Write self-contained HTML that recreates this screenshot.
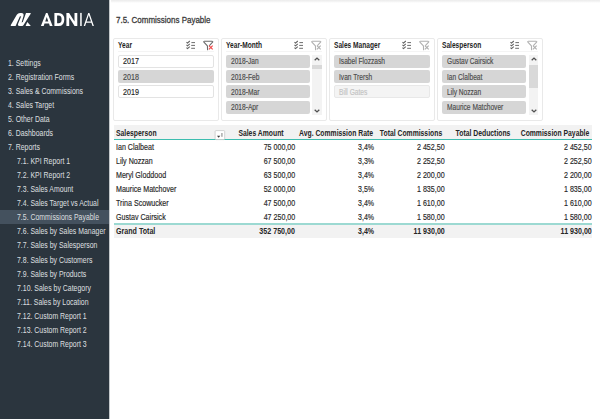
<!DOCTYPE html>
<html><head><meta charset="utf-8">
<style>
*{margin:0;padding:0;box-sizing:border-box}
html,body{width:600px;height:419px;overflow:hidden;background:#fff;font-family:"Liberation Sans",sans-serif}
.a{position:absolute}
.t{position:absolute;white-space:nowrap;-webkit-text-stroke:0.15px currentColor}
.sd{color:#d8dcdf;-webkit-text-stroke:0.05px currentColor}
.sl{position:absolute;top:38px;width:106px;height:83px;border:1px solid #e9e9e9;border-radius:2px;background:#fff}
.sep{position:absolute;height:1px;background:#f4f4f4}
.it{position:absolute;height:13.2px;border-radius:2px}
.sel{background:#d6d6d6}
.uns{background:#fff;border:1px solid #e3e3e3}
.dis{background:#f4f4f4;border:1px solid #e8e8e8}
.sb{position:absolute;background:#f3f3f3}
.thumb{position:absolute;background:#d9d9d9}
</style></head><body>
<div class="a" style="left:0;top:0;width:109px;height:419px;background:#2b353e"></div>
<div class="a" style="left:109px;top:0;width:1px;height:419px;background:#c4c8cb"></div>
<div class="a" style="left:0;top:210px;width:109px;height:14px;background:#44515e"></div>
<svg class="a" style="left:0;top:0" width="109" height="40" viewBox="0 0 109 40"><g fill="#fff" fill-rule="evenodd">
<path d="M11.2,25.9 Q10.3,25.9 10.8,25.0 L16.8,14.8 Q17.9,12.9 20.0,12.9 L21.4,12.9 Q24.2,13.0 23.5,16.0 L21.6,22.5 L22.8,22.0 L26.0,13.0 L30.2,13.0 Q31.2,13.0 30.7,13.8 L23.4,25.3 Q23.0,25.9 22.2,25.9 L19.6,25.9 Q17.4,25.9 18.1,23.7 L21.2,16.2 L19.8,16.6 L15.6,25.9 Z"/>
<path d="M27.3,21.9 L30.8,25.9 L25.6,25.9 Z"/>
<path d="M40.9,26 L46.0,12.9 L47.5,12.9 L52.6,26 L49.8,26 L49.0,23.6 L44.5,23.6 L43.7,26 Z M45.2,21.4 L48.3,21.4 L46.75,16.9 Z"/>
<path d="M54.4,12.9 H58.6 Q64.3,12.9 64.3,19.45 Q64.3,26 58.6,26 H54.4 Z M57.1,15.6 V23.2 H58.6 Q61.6,23.2 61.6,19.4 Q61.6,15.6 58.6,15.6 Z"/>
<path d="M66.4,26 V12.9 H69.1 L74.5,21.5 V12.9 H77.3 V26 H74.6 L69.2,17.4 V26 Z"/>
<rect x="80.2" y="12.9" width="1.5" height="13.1"/>
<path d="M83.7,26 L88.2,12.9 L89.4,12.9 L93.9,26 H92.5 L91.4,22.7 H86.2 L85.1,26 Z M86.6,21.5 H91.0 L88.8,14.9 Z"/>
</g></svg>
<div class="t sd" style="top:55.82px;font-size:8.6px;line-height:14px;height:14px;left:7.80px;transform-origin:0 50%;transform:scaleX(0.806);">1. Settings</div>
<div class="t sd" style="top:69.87px;font-size:8.6px;line-height:14px;height:14px;left:7.80px;transform-origin:0 50%;transform:scaleX(0.806);">2. Registration Forms</div>
<div class="t sd" style="top:83.92px;font-size:8.6px;line-height:14px;height:14px;left:7.80px;transform-origin:0 50%;transform:scaleX(0.806);">3. Sales &amp; Commissions</div>
<div class="t sd" style="top:97.97px;font-size:8.6px;line-height:14px;height:14px;left:7.80px;transform-origin:0 50%;transform:scaleX(0.806);">4. Sales Target</div>
<div class="t sd" style="top:112.02px;font-size:8.6px;line-height:14px;height:14px;left:7.80px;transform-origin:0 50%;transform:scaleX(0.806);">5. Other Data</div>
<div class="t sd" style="top:126.07px;font-size:8.6px;line-height:14px;height:14px;left:7.80px;transform-origin:0 50%;transform:scaleX(0.806);">6. Dashboards</div>
<div class="t sd" style="top:140.12px;font-size:8.6px;line-height:14px;height:14px;left:7.80px;transform-origin:0 50%;transform:scaleX(0.806);">7. Reports</div>
<div class="t sd" style="top:154.17px;font-size:8.6px;line-height:14px;height:14px;left:16.50px;transform-origin:0 50%;transform:scaleX(0.806);">7.1. KPI Report 1</div>
<div class="t sd" style="top:168.22px;font-size:8.6px;line-height:14px;height:14px;left:16.50px;transform-origin:0 50%;transform:scaleX(0.806);">7.2. KPI Report 2</div>
<div class="t sd" style="top:182.27px;font-size:8.6px;line-height:14px;height:14px;left:16.50px;transform-origin:0 50%;transform:scaleX(0.806);">7.3. Sales Amount</div>
<div class="t sd" style="top:196.32px;font-size:8.6px;line-height:14px;height:14px;left:16.50px;transform-origin:0 50%;transform:scaleX(0.806);">7.4. Sales Target vs Actual</div>
<div class="t sd" style="top:210.37px;font-size:8.6px;line-height:14px;height:14px;left:16.50px;transform-origin:0 50%;transform:scaleX(0.806);">7.5. Commissions Payable</div>
<div class="t sd" style="top:224.42px;font-size:8.6px;line-height:14px;height:14px;left:16.50px;transform-origin:0 50%;transform:scaleX(0.806);">7.6. Sales by Sales Manager</div>
<div class="t sd" style="top:238.47px;font-size:8.6px;line-height:14px;height:14px;left:16.50px;transform-origin:0 50%;transform:scaleX(0.806);">7.7. Sales by Salesperson</div>
<div class="t sd" style="top:252.52px;font-size:8.6px;line-height:14px;height:14px;left:16.50px;transform-origin:0 50%;transform:scaleX(0.806);">7.8. Sales by Customers</div>
<div class="t sd" style="top:266.57px;font-size:8.6px;line-height:14px;height:14px;left:16.50px;transform-origin:0 50%;transform:scaleX(0.806);">7.9. Sales by Products</div>
<div class="t sd" style="top:280.62px;font-size:8.6px;line-height:14px;height:14px;left:16.50px;transform-origin:0 50%;transform:scaleX(0.806);">7.10. Sales by Category</div>
<div class="t sd" style="top:294.67px;font-size:8.6px;line-height:14px;height:14px;left:16.50px;transform-origin:0 50%;transform:scaleX(0.806);">7.11. Sales by Location</div>
<div class="t sd" style="top:308.72px;font-size:8.6px;line-height:14px;height:14px;left:16.50px;transform-origin:0 50%;transform:scaleX(0.806);">7.12. Custom Report 1</div>
<div class="t sd" style="top:322.77px;font-size:8.6px;line-height:14px;height:14px;left:16.50px;transform-origin:0 50%;transform:scaleX(0.806);">7.13. Custom Report 2</div>
<div class="t sd" style="top:336.82px;font-size:8.6px;line-height:14px;height:14px;left:16.50px;transform-origin:0 50%;transform:scaleX(0.806);">7.14. Custom Report 3</div>
<div class="a" style="left:111px;top:0;width:489px;height:2.6px;background:linear-gradient(#ebebeb,#f6f6f6 60%,#fff)"></div>
<div class="t " style="top:12.90px;font-size:9.8px;line-height:14px;height:14px;color:#3a3a3a;left:115.60px;transform-origin:0 50%;transform:scaleX(0.815);-webkit-text-stroke:0.3px currentColor;">7.5. Commissions Payable</div>
<div class="sl" style="left:113.0px"></div>
<div class="sep" style="left:118.0px;width:96px;top:51px"></div>
<div class="t " style="top:37.89px;font-size:8.4px;line-height:14px;height:14px;font-weight:bold;-webkit-text-stroke:0.02px currentColor;color:#1f1f1f;left:118.00px;transform-origin:0 50%;transform:scaleX(0.788);">Year</div>
<div class="it uns" style="left:118.0px;top:54.7px;width:96.0px"></div>
<div class="t " style="top:55.26px;font-size:8.2px;line-height:14px;height:14px;color:#262626;left:123.00px;transform-origin:0 50%;transform:scaleX(0.875);">2017</div>
<div class="it sel" style="left:118.0px;top:70.0px;width:96.0px"></div>
<div class="t " style="top:70.56px;font-size:8.2px;line-height:14px;height:14px;color:#4a4a4a;left:123.00px;transform-origin:0 50%;transform:scaleX(0.875);">2018</div>
<div class="it uns" style="left:118.0px;top:85.3px;width:96.0px"></div>
<div class="t " style="top:85.86px;font-size:8.2px;line-height:14px;height:14px;color:#262626;left:123.00px;transform-origin:0 50%;transform:scaleX(0.875);">2019</div>
<svg class="a" style="left:186.0px;top:40px" width="10" height="10" viewBox="0 0 10 10">
<g fill="none" stroke="#606060" stroke-width="1.05" stroke-linejoin="round"><polyline points="0.5,2.1 1.5,3.1 3.8,1.0"/><polyline points="0.5,4.9 1.5,5.9 3.8,3.8"/><polyline points="0.5,7.7 1.5,8.7 3.8,6.6"/></g>
<g stroke="#646464" stroke-width="0.95"><line x1="5.4" y1="2.6" x2="9" y2="2.6"/><line x1="5.2" y1="5.4" x2="9" y2="5.4"/><line x1="5.2" y1="8.3" x2="9" y2="8.3"/></g></svg>
<svg class="a" style="left:203.3px;top:40px" width="11" height="11" viewBox="0 0 11 11">
<path d="M4.6,9.7 L4.4,5.8 L0.9,2.1 Q0.4,1.3 1.4,1.3 L9.1,1.3 Q10.1,1.3 9.6,2.1 L6.6,5.3" fill="none" stroke="#6a6a6a" stroke-width="1.1" stroke-linejoin="round" stroke-linecap="round"/>
<g stroke="#f04a4a" stroke-width="1.15"><line x1="5.9" y1="5.6" x2="9.7" y2="9.4"/><line x1="9.7" y1="5.6" x2="5.9" y2="9.4"/></g></svg>
<div class="sl" style="left:220.6px"></div>
<div class="sep" style="left:225.6px;width:96px;top:51px"></div>
<div class="t " style="top:37.89px;font-size:8.4px;line-height:14px;height:14px;font-weight:bold;-webkit-text-stroke:0.02px currentColor;color:#1f1f1f;left:225.60px;transform-origin:0 50%;transform:scaleX(0.788);">Year-Month</div>
<div class="it sel" style="left:225.6px;top:54.7px;width:84.2px"></div>
<div class="t " style="top:55.26px;font-size:8.2px;line-height:14px;height:14px;color:#4a4a4a;left:230.60px;transform-origin:0 50%;transform:scaleX(0.809);">2018-Jan</div>
<div class="it sel" style="left:225.6px;top:70.0px;width:84.2px"></div>
<div class="t " style="top:70.56px;font-size:8.2px;line-height:14px;height:14px;color:#4a4a4a;left:230.60px;transform-origin:0 50%;transform:scaleX(0.809);">2018-Feb</div>
<div class="it sel" style="left:225.6px;top:85.3px;width:84.2px"></div>
<div class="t " style="top:85.86px;font-size:8.2px;line-height:14px;height:14px;color:#4a4a4a;left:230.60px;transform-origin:0 50%;transform:scaleX(0.809);">2018-Mar</div>
<div class="it sel" style="left:225.6px;top:100.7px;width:84.2px"></div>
<div class="t " style="top:101.26px;font-size:8.2px;line-height:14px;height:14px;color:#4a4a4a;left:230.60px;transform-origin:0 50%;transform:scaleX(0.809);">2018-Apr</div>
<div class="sb" style="left:312.4px;top:54.8px;width:9.4px;height:60.5px"></div>
<div class="thumb" style="left:312.4px;top:65px;width:9.4px;height:4.2px"></div>
<svg class="a" style="left:314.1px;top:57.3px" width="6" height="4" viewBox="0 0 6 4"><polyline points="0.7,3.3 3,1.1 5.3,3.3" fill="none" stroke="#505050" stroke-width="1.3"/></svg>
<svg class="a" style="left:314.1px;top:108.5px" width="6" height="4" viewBox="0 0 6 4"><polyline points="0.7,0.7 3,2.9 5.3,0.7" fill="none" stroke="#505050" stroke-width="1.3"/></svg>
<svg class="a" style="left:293.6px;top:40px" width="10" height="10" viewBox="0 0 10 10">
<g fill="none" stroke="#606060" stroke-width="1.05" stroke-linejoin="round"><polyline points="0.5,2.1 1.5,3.1 3.8,1.0"/><polyline points="0.5,4.9 1.5,5.9 3.8,3.8"/><polyline points="0.5,7.7 1.5,8.7 3.8,6.6"/></g>
<g stroke="#646464" stroke-width="0.95"><line x1="5.4" y1="2.6" x2="9" y2="2.6"/><line x1="5.2" y1="5.4" x2="9" y2="5.4"/><line x1="5.2" y1="8.3" x2="9" y2="8.3"/></g></svg>
<svg class="a" style="left:310.9px;top:40px" width="11" height="11" viewBox="0 0 11 11">
<path d="M4.6,9.7 L4.4,5.8 L0.9,2.1 Q0.4,1.3 1.4,1.3 L9.1,1.3 Q10.1,1.3 9.6,2.1 L6.6,5.3" fill="none" stroke="#b0b0b0" stroke-width="1.1" stroke-linejoin="round" stroke-linecap="round"/>
<g stroke="#b0b0b0" stroke-width="1.15"><line x1="5.9" y1="5.6" x2="9.7" y2="9.4"/><line x1="9.7" y1="5.6" x2="5.9" y2="9.4"/></g></svg>
<div class="sl" style="left:328.8px"></div>
<div class="sep" style="left:333.8px;width:96px;top:51px"></div>
<div class="t " style="top:37.89px;font-size:8.4px;line-height:14px;height:14px;font-weight:bold;-webkit-text-stroke:0.02px currentColor;color:#1f1f1f;left:333.80px;transform-origin:0 50%;transform:scaleX(0.788);">Sales Manager</div>
<div class="it sel" style="left:333.8px;top:54.7px;width:96.0px"></div>
<div class="t " style="top:55.26px;font-size:8.2px;line-height:14px;height:14px;color:#4a4a4a;left:338.80px;transform-origin:0 50%;transform:scaleX(0.809);">Isabel Flozzash</div>
<div class="it sel" style="left:333.8px;top:70.0px;width:96.0px"></div>
<div class="t " style="top:70.56px;font-size:8.2px;line-height:14px;height:14px;color:#4a4a4a;left:338.80px;transform-origin:0 50%;transform:scaleX(0.809);">Ivan Trersh</div>
<div class="it dis" style="left:333.8px;top:85.3px;width:96.0px"></div>
<div class="t " style="top:85.86px;font-size:8.2px;line-height:14px;height:14px;color:#c3c3c3;left:338.80px;transform-origin:0 50%;transform:scaleX(0.809);">Bill Gates</div>
<svg class="a" style="left:401.8px;top:40px" width="10" height="10" viewBox="0 0 10 10">
<g fill="none" stroke="#606060" stroke-width="1.05" stroke-linejoin="round"><polyline points="0.5,2.1 1.5,3.1 3.8,1.0"/><polyline points="0.5,4.9 1.5,5.9 3.8,3.8"/><polyline points="0.5,7.7 1.5,8.7 3.8,6.6"/></g>
<g stroke="#646464" stroke-width="0.95"><line x1="5.4" y1="2.6" x2="9" y2="2.6"/><line x1="5.2" y1="5.4" x2="9" y2="5.4"/><line x1="5.2" y1="8.3" x2="9" y2="8.3"/></g></svg>
<svg class="a" style="left:419.1px;top:40px" width="11" height="11" viewBox="0 0 11 11">
<path d="M4.6,9.7 L4.4,5.8 L0.9,2.1 Q0.4,1.3 1.4,1.3 L9.1,1.3 Q10.1,1.3 9.6,2.1 L6.6,5.3" fill="none" stroke="#b0b0b0" stroke-width="1.1" stroke-linejoin="round" stroke-linecap="round"/>
<g stroke="#b0b0b0" stroke-width="1.15"><line x1="5.9" y1="5.6" x2="9.7" y2="9.4"/><line x1="9.7" y1="5.6" x2="5.9" y2="9.4"/></g></svg>
<div class="sl" style="left:437.1px"></div>
<div class="sep" style="left:442.1px;width:96px;top:51px"></div>
<div class="t " style="top:37.89px;font-size:8.4px;line-height:14px;height:14px;font-weight:bold;-webkit-text-stroke:0.02px currentColor;color:#1f1f1f;left:442.10px;transform-origin:0 50%;transform:scaleX(0.788);">Salesperson</div>
<div class="it sel" style="left:442.1px;top:54.7px;width:84.2px"></div>
<div class="t " style="top:55.26px;font-size:8.2px;line-height:14px;height:14px;color:#4a4a4a;left:447.10px;transform-origin:0 50%;transform:scaleX(0.809);">Gustav Cairsick</div>
<div class="it sel" style="left:442.1px;top:70.0px;width:84.2px"></div>
<div class="t " style="top:70.56px;font-size:8.2px;line-height:14px;height:14px;color:#4a4a4a;left:447.10px;transform-origin:0 50%;transform:scaleX(0.809);">Ian Clalbeat</div>
<div class="it sel" style="left:442.1px;top:85.3px;width:84.2px"></div>
<div class="t " style="top:85.86px;font-size:8.2px;line-height:14px;height:14px;color:#4a4a4a;left:447.10px;transform-origin:0 50%;transform:scaleX(0.809);">Lily Nozzan</div>
<div class="it sel" style="left:442.1px;top:100.7px;width:84.2px"></div>
<div class="t " style="top:101.26px;font-size:8.2px;line-height:14px;height:14px;color:#4a4a4a;left:447.10px;transform-origin:0 50%;transform:scaleX(0.809);">Maurice Matchover</div>
<div class="sb" style="left:528.9px;top:54.8px;width:9.4px;height:60.5px"></div>
<div class="thumb" style="left:528.9px;top:65px;width:9.4px;height:22.8px"></div>
<svg class="a" style="left:530.6px;top:57.3px" width="6" height="4" viewBox="0 0 6 4"><polyline points="0.7,3.3 3,1.1 5.3,3.3" fill="none" stroke="#505050" stroke-width="1.3"/></svg>
<svg class="a" style="left:530.6px;top:108.5px" width="6" height="4" viewBox="0 0 6 4"><polyline points="0.7,0.7 3,2.9 5.3,0.7" fill="none" stroke="#505050" stroke-width="1.3"/></svg>
<svg class="a" style="left:510.1px;top:40px" width="10" height="10" viewBox="0 0 10 10">
<g fill="none" stroke="#606060" stroke-width="1.05" stroke-linejoin="round"><polyline points="0.5,2.1 1.5,3.1 3.8,1.0"/><polyline points="0.5,4.9 1.5,5.9 3.8,3.8"/><polyline points="0.5,7.7 1.5,8.7 3.8,6.6"/></g>
<g stroke="#646464" stroke-width="0.95"><line x1="5.4" y1="2.6" x2="9" y2="2.6"/><line x1="5.2" y1="5.4" x2="9" y2="5.4"/><line x1="5.2" y1="8.3" x2="9" y2="8.3"/></g></svg>
<svg class="a" style="left:527.4px;top:40px" width="11" height="11" viewBox="0 0 11 11">
<path d="M4.6,9.7 L4.4,5.8 L0.9,2.1 Q0.4,1.3 1.4,1.3 L9.1,1.3 Q10.1,1.3 9.6,2.1 L6.6,5.3" fill="none" stroke="#b0b0b0" stroke-width="1.1" stroke-linejoin="round" stroke-linecap="round"/>
<g stroke="#b0b0b0" stroke-width="1.15"><line x1="5.9" y1="5.6" x2="9.7" y2="9.4"/><line x1="9.7" y1="5.6" x2="5.9" y2="9.4"/></g></svg>
<div class="a" style="left:114px;top:125px;width:478.2px;height:14px;background:#f2f2f2"></div>
<div class="a" style="left:114px;top:138.8px;width:478.2px;height:1.4px;background:#3dbdaf"></div>
<div class="a" style="left:114px;top:224.7px;width:478.2px;height:13.2px;background:#f2f2f2"></div>
<div class="a" style="left:114px;top:223.4px;width:478.2px;height:1.3px;background:#9cd9d2"></div>
<svg class="a" style="left:214.2px;top:129.7px" width="12" height="11" viewBox="0 0 12 11">
<rect x="1.1" y="0.6" width="9.6" height="9" rx="1" fill="#fff" stroke="#c6c6c6" stroke-width="0.8"/>
<path d="M3.0,5.8 H6.3 L4.65,7.8 Z" fill="#3a3a3a"/><rect x="7.1" y="3" width="1.6" height="3.8" fill="#b0b0b0"/></svg>
<div class="t " style="top:125.89px;font-size:8.4px;line-height:14px;height:14px;font-weight:bold;-webkit-text-stroke:0.02px currentColor;color:#262626;left:115.80px;transform-origin:0 50%;transform:scaleX(0.814);">Salesperson</div>
<div class="t " style="top:125.89px;font-size:8.4px;line-height:14px;height:14px;font-weight:bold;-webkit-text-stroke:0.02px currentColor;color:#262626;left:261.00px;transform-origin:50% 50%;transform:translateX(-50%) scaleX(0.814);">Sales Amount</div>
<div class="t " style="top:125.89px;font-size:8.4px;line-height:14px;height:14px;font-weight:bold;-webkit-text-stroke:0.02px currentColor;color:#262626;left:336.00px;transform-origin:50% 50%;transform:translateX(-50%) scaleX(0.814);">Avg. Commission Rate</div>
<div class="t " style="top:125.89px;font-size:8.4px;line-height:14px;height:14px;font-weight:bold;-webkit-text-stroke:0.02px currentColor;color:#262626;left:411.40px;transform-origin:50% 50%;transform:translateX(-50%) scaleX(0.814);">Total Commissions</div>
<div class="t " style="top:125.89px;font-size:8.4px;line-height:14px;height:14px;font-weight:bold;-webkit-text-stroke:0.02px currentColor;color:#262626;left:483.10px;transform-origin:50% 50%;transform:translateX(-50%) scaleX(0.814);">Total Deductions</div>
<div class="t " style="top:125.89px;font-size:8.4px;line-height:14px;height:14px;font-weight:bold;-webkit-text-stroke:0.02px currentColor;color:#262626;left:555.30px;transform-origin:50% 50%;transform:translateX(-50%) scaleX(0.814);">Commission Payable</div>
<div class="t " style="top:140.19px;font-size:8.4px;line-height:14px;height:14px;color:#262626;left:116.00px;transform-origin:0 50%;transform:scaleX(0.848);">Ian Clalbeat</div>
<div class="t " style="top:140.19px;font-size:8.4px;line-height:14px;height:14px;color:#262626;right:304.70px;transform-origin:100% 50%;transform:scaleX(0.848);">75 000,00</div>
<div class="t " style="top:140.19px;font-size:8.4px;line-height:14px;height:14px;color:#262626;right:225.70px;transform-origin:100% 50%;transform:scaleX(0.84);">3,4%</div>
<div class="t " style="top:140.19px;font-size:8.4px;line-height:14px;height:14px;color:#262626;right:155.00px;transform-origin:100% 50%;transform:scaleX(0.848);">2 452,50</div>
<div class="t " style="top:140.19px;font-size:8.4px;line-height:14px;height:14px;color:#262626;right:8.70px;transform-origin:100% 50%;transform:scaleX(0.848);">2 452,50</div>
<div class="t " style="top:154.19px;font-size:8.4px;line-height:14px;height:14px;color:#262626;left:116.00px;transform-origin:0 50%;transform:scaleX(0.848);">Lily Nozzan</div>
<div class="t " style="top:154.19px;font-size:8.4px;line-height:14px;height:14px;color:#262626;right:304.70px;transform-origin:100% 50%;transform:scaleX(0.848);">67 500,00</div>
<div class="t " style="top:154.19px;font-size:8.4px;line-height:14px;height:14px;color:#262626;right:225.70px;transform-origin:100% 50%;transform:scaleX(0.84);">3,3%</div>
<div class="t " style="top:154.19px;font-size:8.4px;line-height:14px;height:14px;color:#262626;right:155.00px;transform-origin:100% 50%;transform:scaleX(0.848);">2 252,50</div>
<div class="t " style="top:154.19px;font-size:8.4px;line-height:14px;height:14px;color:#262626;right:8.70px;transform-origin:100% 50%;transform:scaleX(0.848);">2 252,50</div>
<div class="t " style="top:168.19px;font-size:8.4px;line-height:14px;height:14px;color:#262626;left:116.00px;transform-origin:0 50%;transform:scaleX(0.848);">Meryl Gloddood</div>
<div class="t " style="top:168.19px;font-size:8.4px;line-height:14px;height:14px;color:#262626;right:304.70px;transform-origin:100% 50%;transform:scaleX(0.848);">63 500,00</div>
<div class="t " style="top:168.19px;font-size:8.4px;line-height:14px;height:14px;color:#262626;right:225.70px;transform-origin:100% 50%;transform:scaleX(0.84);">3,4%</div>
<div class="t " style="top:168.19px;font-size:8.4px;line-height:14px;height:14px;color:#262626;right:155.00px;transform-origin:100% 50%;transform:scaleX(0.848);">2 200,00</div>
<div class="t " style="top:168.19px;font-size:8.4px;line-height:14px;height:14px;color:#262626;right:8.70px;transform-origin:100% 50%;transform:scaleX(0.848);">2 200,00</div>
<div class="t " style="top:182.19px;font-size:8.4px;line-height:14px;height:14px;color:#262626;left:116.00px;transform-origin:0 50%;transform:scaleX(0.848);">Maurice Matchover</div>
<div class="t " style="top:182.19px;font-size:8.4px;line-height:14px;height:14px;color:#262626;right:304.70px;transform-origin:100% 50%;transform:scaleX(0.848);">52 000,00</div>
<div class="t " style="top:182.19px;font-size:8.4px;line-height:14px;height:14px;color:#262626;right:225.70px;transform-origin:100% 50%;transform:scaleX(0.84);">3,5%</div>
<div class="t " style="top:182.19px;font-size:8.4px;line-height:14px;height:14px;color:#262626;right:155.00px;transform-origin:100% 50%;transform:scaleX(0.848);">1 835,00</div>
<div class="t " style="top:182.19px;font-size:8.4px;line-height:14px;height:14px;color:#262626;right:8.70px;transform-origin:100% 50%;transform:scaleX(0.848);">1 835,00</div>
<div class="t " style="top:196.19px;font-size:8.4px;line-height:14px;height:14px;color:#262626;left:116.00px;transform-origin:0 50%;transform:scaleX(0.848);">Trina Scowucker</div>
<div class="t " style="top:196.19px;font-size:8.4px;line-height:14px;height:14px;color:#262626;right:304.70px;transform-origin:100% 50%;transform:scaleX(0.848);">47 500,00</div>
<div class="t " style="top:196.19px;font-size:8.4px;line-height:14px;height:14px;color:#262626;right:225.70px;transform-origin:100% 50%;transform:scaleX(0.84);">3,4%</div>
<div class="t " style="top:196.19px;font-size:8.4px;line-height:14px;height:14px;color:#262626;right:155.00px;transform-origin:100% 50%;transform:scaleX(0.848);">1 610,00</div>
<div class="t " style="top:196.19px;font-size:8.4px;line-height:14px;height:14px;color:#262626;right:8.70px;transform-origin:100% 50%;transform:scaleX(0.848);">1 610,00</div>
<div class="t " style="top:210.19px;font-size:8.4px;line-height:14px;height:14px;color:#262626;left:116.00px;transform-origin:0 50%;transform:scaleX(0.848);">Gustav Cairsick</div>
<div class="t " style="top:210.19px;font-size:8.4px;line-height:14px;height:14px;color:#262626;right:304.70px;transform-origin:100% 50%;transform:scaleX(0.848);">47 250,00</div>
<div class="t " style="top:210.19px;font-size:8.4px;line-height:14px;height:14px;color:#262626;right:225.70px;transform-origin:100% 50%;transform:scaleX(0.84);">3,4%</div>
<div class="t " style="top:210.19px;font-size:8.4px;line-height:14px;height:14px;color:#262626;right:155.00px;transform-origin:100% 50%;transform:scaleX(0.848);">1 580,00</div>
<div class="t " style="top:210.19px;font-size:8.4px;line-height:14px;height:14px;color:#262626;right:8.70px;transform-origin:100% 50%;transform:scaleX(0.848);">1 580,00</div>
<div class="t " style="top:224.39px;font-size:8.4px;line-height:14px;height:14px;font-weight:bold;-webkit-text-stroke:0.02px currentColor;color:#262626;left:116.00px;transform-origin:0 50%;transform:scaleX(0.848);">Grand Total</div>
<div class="t " style="top:224.39px;font-size:8.4px;line-height:14px;height:14px;font-weight:bold;-webkit-text-stroke:0.02px currentColor;color:#262626;right:304.70px;transform-origin:100% 50%;transform:scaleX(0.848);">352 750,00</div>
<div class="t " style="top:224.39px;font-size:8.4px;line-height:14px;height:14px;font-weight:bold;-webkit-text-stroke:0.02px currentColor;color:#262626;right:225.70px;transform-origin:100% 50%;transform:scaleX(0.84);">3,4%</div>
<div class="t " style="top:224.39px;font-size:8.4px;line-height:14px;height:14px;font-weight:bold;-webkit-text-stroke:0.02px currentColor;color:#262626;right:155.00px;transform-origin:100% 50%;transform:scaleX(0.848);">11 930,00</div>
<div class="t " style="top:224.39px;font-size:8.4px;line-height:14px;height:14px;font-weight:bold;-webkit-text-stroke:0.02px currentColor;color:#262626;right:8.70px;transform-origin:100% 50%;transform:scaleX(0.848);">11 930,00</div>
</body></html>
